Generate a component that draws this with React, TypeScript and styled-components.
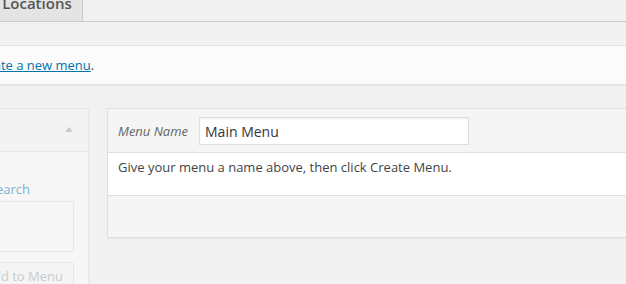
import React from 'react';
import styled, { createGlobalStyle } from 'styled-components';

const GlobalStyle = createGlobalStyle`
  html, body {
    margin: 0;
    padding: 0;
    background: #f1f1f1;
    overflow: hidden;
  }
  body {
    font-family: "Open Sans", "Liberation Sans", sans-serif;
    font-size: 13px;
    line-height: 1.4em;
    color: #444;
  }
`;

/* the page is seen cropped: its left part is off screen */
const Wrap = styled.div`
  width: 1120px;
  margin-left: -192px;
`;

const TabNav = styled.div`
  display: flex;
  gap: 7px;
  margin-top: -14px;
  padding-left: 12px;
  border-bottom: 1px solid #ccc;
`;

const Tab = styled.a<{ $active?: boolean }>`
  display: block;
  padding: 4px 10px 6px;
  border: 1px solid #ccc;
  border-bottom: none;
  margin-bottom: ${(p) => (p.$active ? '-1px' : '0')};
  background: ${(p) => (p.$active ? '#f1f1f1' : '#e4e4e4')};
  color: ${(p) => (p.$active ? '#000' : '#555')};
  font-size: 15px;
  font-weight: 600;
  line-height: 24px;
  white-space: nowrap;
  text-decoration: none;
`;

const Notice = styled.div`
  margin-top: 23px;
  padding: 10px;
  line-height: 18px;
  background: #fbfbfb;
  border: 1px solid #e5e5e5;
  box-shadow: 0 1px 1px rgba(0, 0, 0, 0.04);
`;

const Link = styled.a`
  color: #0073aa;
  text-decoration: underline;
`;

const Columns = styled.div`
  display: flex;
  align-items: flex-start;
  gap: 18px;
  margin-top: 23px;
`;

const SideColumn = styled.div`
  width: 281px;
  flex: none;
  opacity: 0.5;
`;

const Accordion = styled.div`
  background: #fff;
  border: 1px solid #dfdfdf;
  box-shadow: 0 1px 1px rgba(0, 0, 0, 0.04);
`;

const SectionTitle = styled.div`
  display: flex;
  align-items: center;
  justify-content: space-between;
  padding: 10px 15px 11px 14px;
  line-height: 21px;
  background: #f5f5f5;
  border-bottom: 1px solid #dfdfdf;
  color: #23282d;
  font-size: 14px;
  font-weight: 600;
`;

const SectionBody = styled.div`
  padding: 10px 14px 10px 14px;
  background: #fdfdfd;
`;

const TypeTabs = styled.div`
  display: flex;
  gap: 14px;
  margin-top: 18px;
  padding-left: 16px;
  line-height: 18px;
`;

const TypeTab = styled.a<{ $current?: boolean }>`
  color: ${(p) => (p.$current ? '#444' : '#0073aa')};
  text-decoration: none;
`;

const TabsPanel = styled.div`
  height: 49px;
  margin-top: 3px;
  border: 1px solid #ddd;
  background: #fdfdfd;
`;

const ButtonRow = styled.div`
  display: flex;
  justify-content: flex-end;
  margin-top: 10px;
`;

const DisabledButton = styled.button`
  height: 28px;
  padding: 0 10px 1px;
  font-family: inherit;
  font-size: 13px;
  line-height: 26px;
  color: #a0a5aa;
  background: #f7f7f7;
  border: 1px solid #ddd;
  border-radius: 3px;
`;

const EditPanel = styled.div`
  flex: 1;
  border: 1px solid #dfdfdf;
  box-shadow: 0 1px 1px rgba(0, 0, 0, 0.04);
`;

const PanelHeader = styled.div`
  display: flex;
  align-items: center;
  padding: 8px 10px 7px;
  background: #f5f5f5;
  border-bottom: 1px solid #dfdfdf;
`;

const Label = styled.label`
  margin-right: 11px;
  font-style: italic;
  color: #666;
`;

const NameInput = styled.input`
  box-sizing: border-box;
  width: 270px;
  height: 28px;
  padding: 3px 5px;
  font-family: inherit;
  font-size: 14px;
  color: #32373c;
  background: #fff;
  border: 1px solid #ddd;
  box-shadow: inset 0 1px 2px rgba(0, 0, 0, 0.07);
  outline: none;
`;

const PanelBody = styled.div`
  padding: 5px 10px 18px;
  line-height: 19px;
  background: #fff;
  border-bottom: 1px solid #dfdfdf;
`;

const PanelFooter = styled.div`
  height: 41px;
  background: #f5f5f5;
`;

const Arrow = () => (
  <svg width="8" height="5" viewBox="0 0 8 5">
    <polygon points="4,0 8,5 0,5" fill="#a0a5aa" />
  </svg>
);

const App: React.FC = () => {
  return (
    <>
      <GlobalStyle />
      <Wrap>
        <TabNav>
          <Tab $active>Edit Menus</Tab>
          <Tab>Manage Locations</Tab>
        </TabNav>

        <Notice>
          Edit your menu below, or <Link href="#">create a new menu</Link>.
        </Notice>

        <Columns>
          <SideColumn>
            <Accordion>
              <SectionTitle>
                Pages
                <Arrow />
              </SectionTitle>
              <SectionBody>
                <TypeTabs>
                  <TypeTab $current>Most Recent</TypeTab>
                  <TypeTab>View All</TypeTab>
                  <TypeTab>Search</TypeTab>
                </TypeTabs>
                <TabsPanel />
                <ButtonRow>
                  <DisabledButton disabled>Add to Menu</DisabledButton>
                </ButtonRow>
              </SectionBody>
            </Accordion>
          </SideColumn>

          <EditPanel>
            <PanelHeader>
              <Label htmlFor="menu-name">Menu Name</Label>
              <NameInput id="menu-name" defaultValue="Main Menu" />
            </PanelHeader>
            <PanelBody>Give your menu a name above, then click Create Menu.</PanelBody>
            <PanelFooter />
          </EditPanel>
        </Columns>
      </Wrap>
    </>
  );
};

export default App;
